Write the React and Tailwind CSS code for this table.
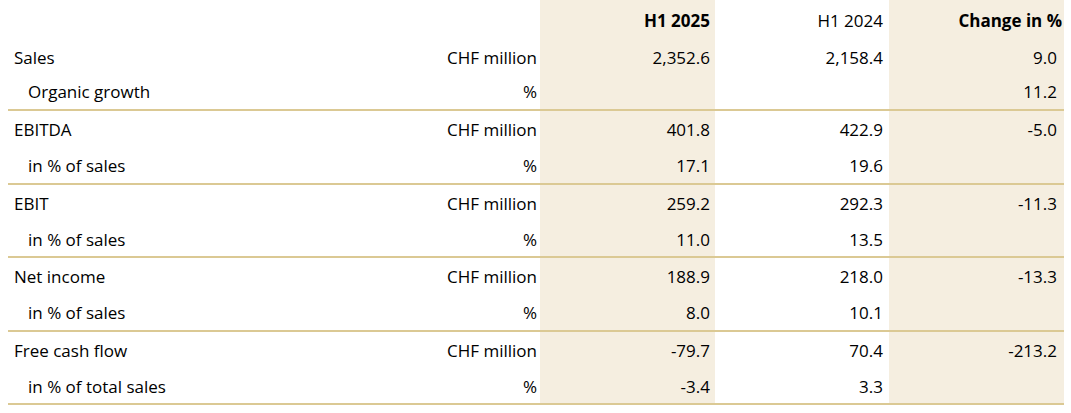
import React from 'react'

const groups = [
  [
    { label: 'Sales', unit: 'CHF million', a: '2,352.6', b: '2,158.4', c: '9.0' },
    { label: 'Organic growth', unit: '%', a: '', b: '', c: '11.2', sub: true },
  ],
  [
    { label: 'EBITDA', unit: 'CHF million', a: '401.8', b: '422.9', c: '-5.0' },
    { label: 'in % of sales', unit: '%', a: '17.1', b: '19.6', c: '', sub: true },
  ],
  [
    { label: 'EBIT', unit: 'CHF million', a: '259.2', b: '292.3', c: '-11.3' },
    { label: 'in % of sales', unit: '%', a: '11.0', b: '13.5', c: '', sub: true, short: true },
  ],
  [
    { label: 'Net income', unit: 'CHF million', a: '188.9', b: '218.0', c: '-13.3' },
    { label: 'in % of sales', unit: '%', a: '8.0', b: '10.1', c: '', sub: true },
  ],
  [
    { label: 'Free cash flow', unit: 'CHF million', a: '-79.7', b: '70.4', c: '-213.2' },
    { label: 'in % of total sales', unit: '%', a: '-3.4', b: '3.3', c: '', sub: true, short: true },
  ],
]

function Row({ row, first }) {
  const size = first ? 'h-9 leading-[42px]' : row.short ? 'h-[35px] leading-[38px]' : 'h-9 leading-[38px]'
  return (
    <div className={`grid grid-cols-[532px_175px_174px_175px] overflow-hidden ${size}`}>
      <div className="flex justify-between pr-[3px]">
        <span className={row.sub ? 'pl-5' : 'pl-1.5'}>{row.label}</span>
        <span>{row.unit}</span>
      </div>
      <div className="bg-[#f5eee0] text-right pr-[5px]">{row.a}</div>
      <div className="text-right pr-[6px]">{row.b}</div>
      <div className="bg-[#f5eee0] text-right pr-[7px]">{row.c}</div>
    </div>
  )
}

export default function App() {
  return (
    <div className="min-h-screen bg-white pl-2 text-[17px] text-black" style={{ fontFamily: '"Open Sans", sans-serif' }}>
      <div className="w-[1056px]">
        <div className="grid grid-cols-[532px_175px_174px_175px] h-[37px] leading-[41px]">
          <div></div>
          <div className="bg-[#f5eee0] text-right pr-[5px] font-bold">H1 2025</div>
          <div className="text-right pr-[6px]">H1 2024</div>
          <div className="bg-[#f5eee0] text-right pr-[2px] font-bold">Change in %</div>
        </div>
        {groups.map((g, i) => (
          <div key={i} className="border-b-2 border-[#dbc994]">
            {g.map((row, j) => (
              <Row key={j} row={row} first={i === 0 && j === 0} />
            ))}
          </div>
        ))}
      </div>
    </div>
  )
}
